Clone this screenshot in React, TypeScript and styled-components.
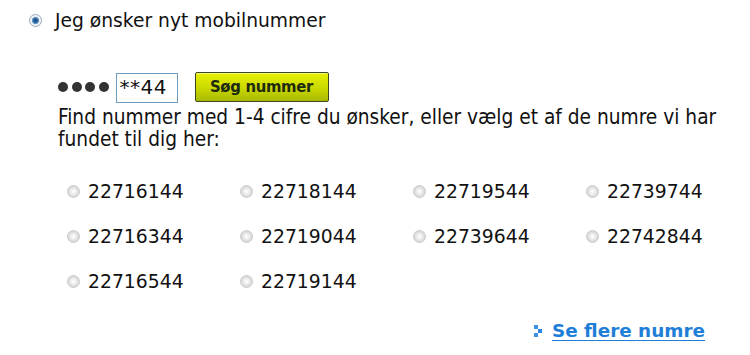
import styled, { createGlobalStyle } from "styled-components";

const GlobalStyle = createGlobalStyle`
    html, body {
        margin:0;
        padding:0;
        background:#ffffff;
    }
    body {
        font-family:"DejaVu Sans", Verdana, sans-serif;
        color:#111111;
    }
`;

const Page = styled.div`
    width:750px;
    height:355px;
    box-sizing:border-box;
    padding:9px 0 0 29px;
`;

const OptionRow = styled.label`
    display:flex;
    align-items:center;
    gap:13px;
    font-size:18.7px;
    height:22px;
`;

const Radio = styled.span<{ $checked?: boolean }>`
    display:inline-block;
    box-sizing:border-box;
    width:13px;
    height:13px;
    border-radius:50%;
    border:1px solid ${(p) => (p.$checked ? "#9aa7b4" : "#c8c8c8")};
    background:${(p) =>
        p.$checked
            ? "radial-gradient(circle at 50% 50%, #1b3f66 0, #2f6a9e 2px, #4d8bc0 3px, #e8eef4 4px, #ffffff 6px)"
            : "radial-gradient(circle at 50% 50%, #ffffff 0, #f3f3f3 2px, #d9d9d9 5px, #eeeeee 6px)"};
    flex-shrink:0;
`;

const Body = styled.div`
    padding:40px 0 0 29px;
`;

const SearchRow = styled.div`
    display:flex;
    align-items:center;
    height:31px;
`;

const Dots = styled.div`
    display:flex;
    gap:3.5px;
    margin-right:7px;
`;

const Dot = styled.span`
    width:10px;
    height:10px;
    border-radius:50%;
    background:#333333;
`;

const DigitInput = styled.div`
    box-sizing:border-box;
    width:62px;
    height:30px;
    border:1px solid #6d9ec2;
    font-size:20px;
    line-height:26px;
    padding:0 0 0 3px;
    letter-spacing:0.5px;
    margin:2px 17px 0 0;
`;

const SearchButton = styled.button`
    box-sizing:border-box;
    width:134px;
    height:30px;
    border:1px solid #3b4a1c;
    border-radius:2px;
    background:linear-gradient(#e8f000 0%, #c9d800 55%, #a9b800 100%);
    box-shadow:inset 0 1px 0 #f3f77a;
    font-family:"DejaVu Sans Condensed", "DejaVu Sans", sans-serif;
    font-weight:bold;
    font-size:16.5px;
    color:#1e2a10;
    padding:0;
    letter-spacing:-0.3px;
`;

const Hint = styled.p`
    margin:4px 0 0 0;
    font-size:20.7px;
    line-height:22px;
    width:680px;
    font-family:"DejaVu Sans Condensed", "DejaVu Sans", sans-serif;
`;

const NumberGrid = styled.div`
    display:grid;
    grid-template-columns:repeat(4, 173px);
    grid-auto-rows:45px;
    margin:29px 0 0 9px;
`;

const NumberOption = styled.label`
    display:flex;
    align-items:center;
    gap:8px;
    font-size:18.8px;
    height:24px;
`;

const Footer = styled.div`
    display:flex;
    justify-content:flex-end;
    align-items:center;
    gap:9px;
    padding-right:45px;
    margin-top:6px;
`;

const MoreLink = styled.a`
    color:#1f7ed8;
    font-weight:bold;
    font-size:18.4px;
    text-decoration:underline;
    text-underline-offset:3px;
`;

const numbers = [
    "22716144", "22718144", "22719544", "22739744",
    "22716344", "22719044", "22739644", "22742844",
    "22716544", "22719144",
];

function ArrowIcon() {
    return (
        <svg width="9" height="12" viewBox="0 0 9 12">
            <rect x="0" y="0" width="4" height="4" fill="#3a92e2" />
            <rect x="4" y="4" width="4" height="4" fill="#2a86dc" />
            <rect x="0" y="8" width="4" height="4" fill="#3a92e2" />
        </svg>
    );
}

function App() {
    return (
        <Page>
            <GlobalStyle />
            <OptionRow>
                <Radio $checked />
                Jeg ønsker nyt mobilnummer
            </OptionRow>
            <Body>
                <SearchRow>
                    <Dots>
                        <Dot /><Dot /><Dot /><Dot />
                    </Dots>
                    <DigitInput>**44</DigitInput>
                    <SearchButton>Søg nummer</SearchButton>
                </SearchRow>
                <Hint>
                    Find nummer med 1-4 cifre du ønsker, eller vælg et af de numre vi har fundet til dig her:
                </Hint>
                <NumberGrid>
                    {numbers.map((n) => (
                        <NumberOption key={n}>
                            <Radio />
                            {n}
                        </NumberOption>
                    ))}
                </NumberGrid>
            </Body>
            <Footer>
                <ArrowIcon />
                <MoreLink href="#">Se flere numre</MoreLink>
            </Footer>
        </Page>
    );
}

export default App;
